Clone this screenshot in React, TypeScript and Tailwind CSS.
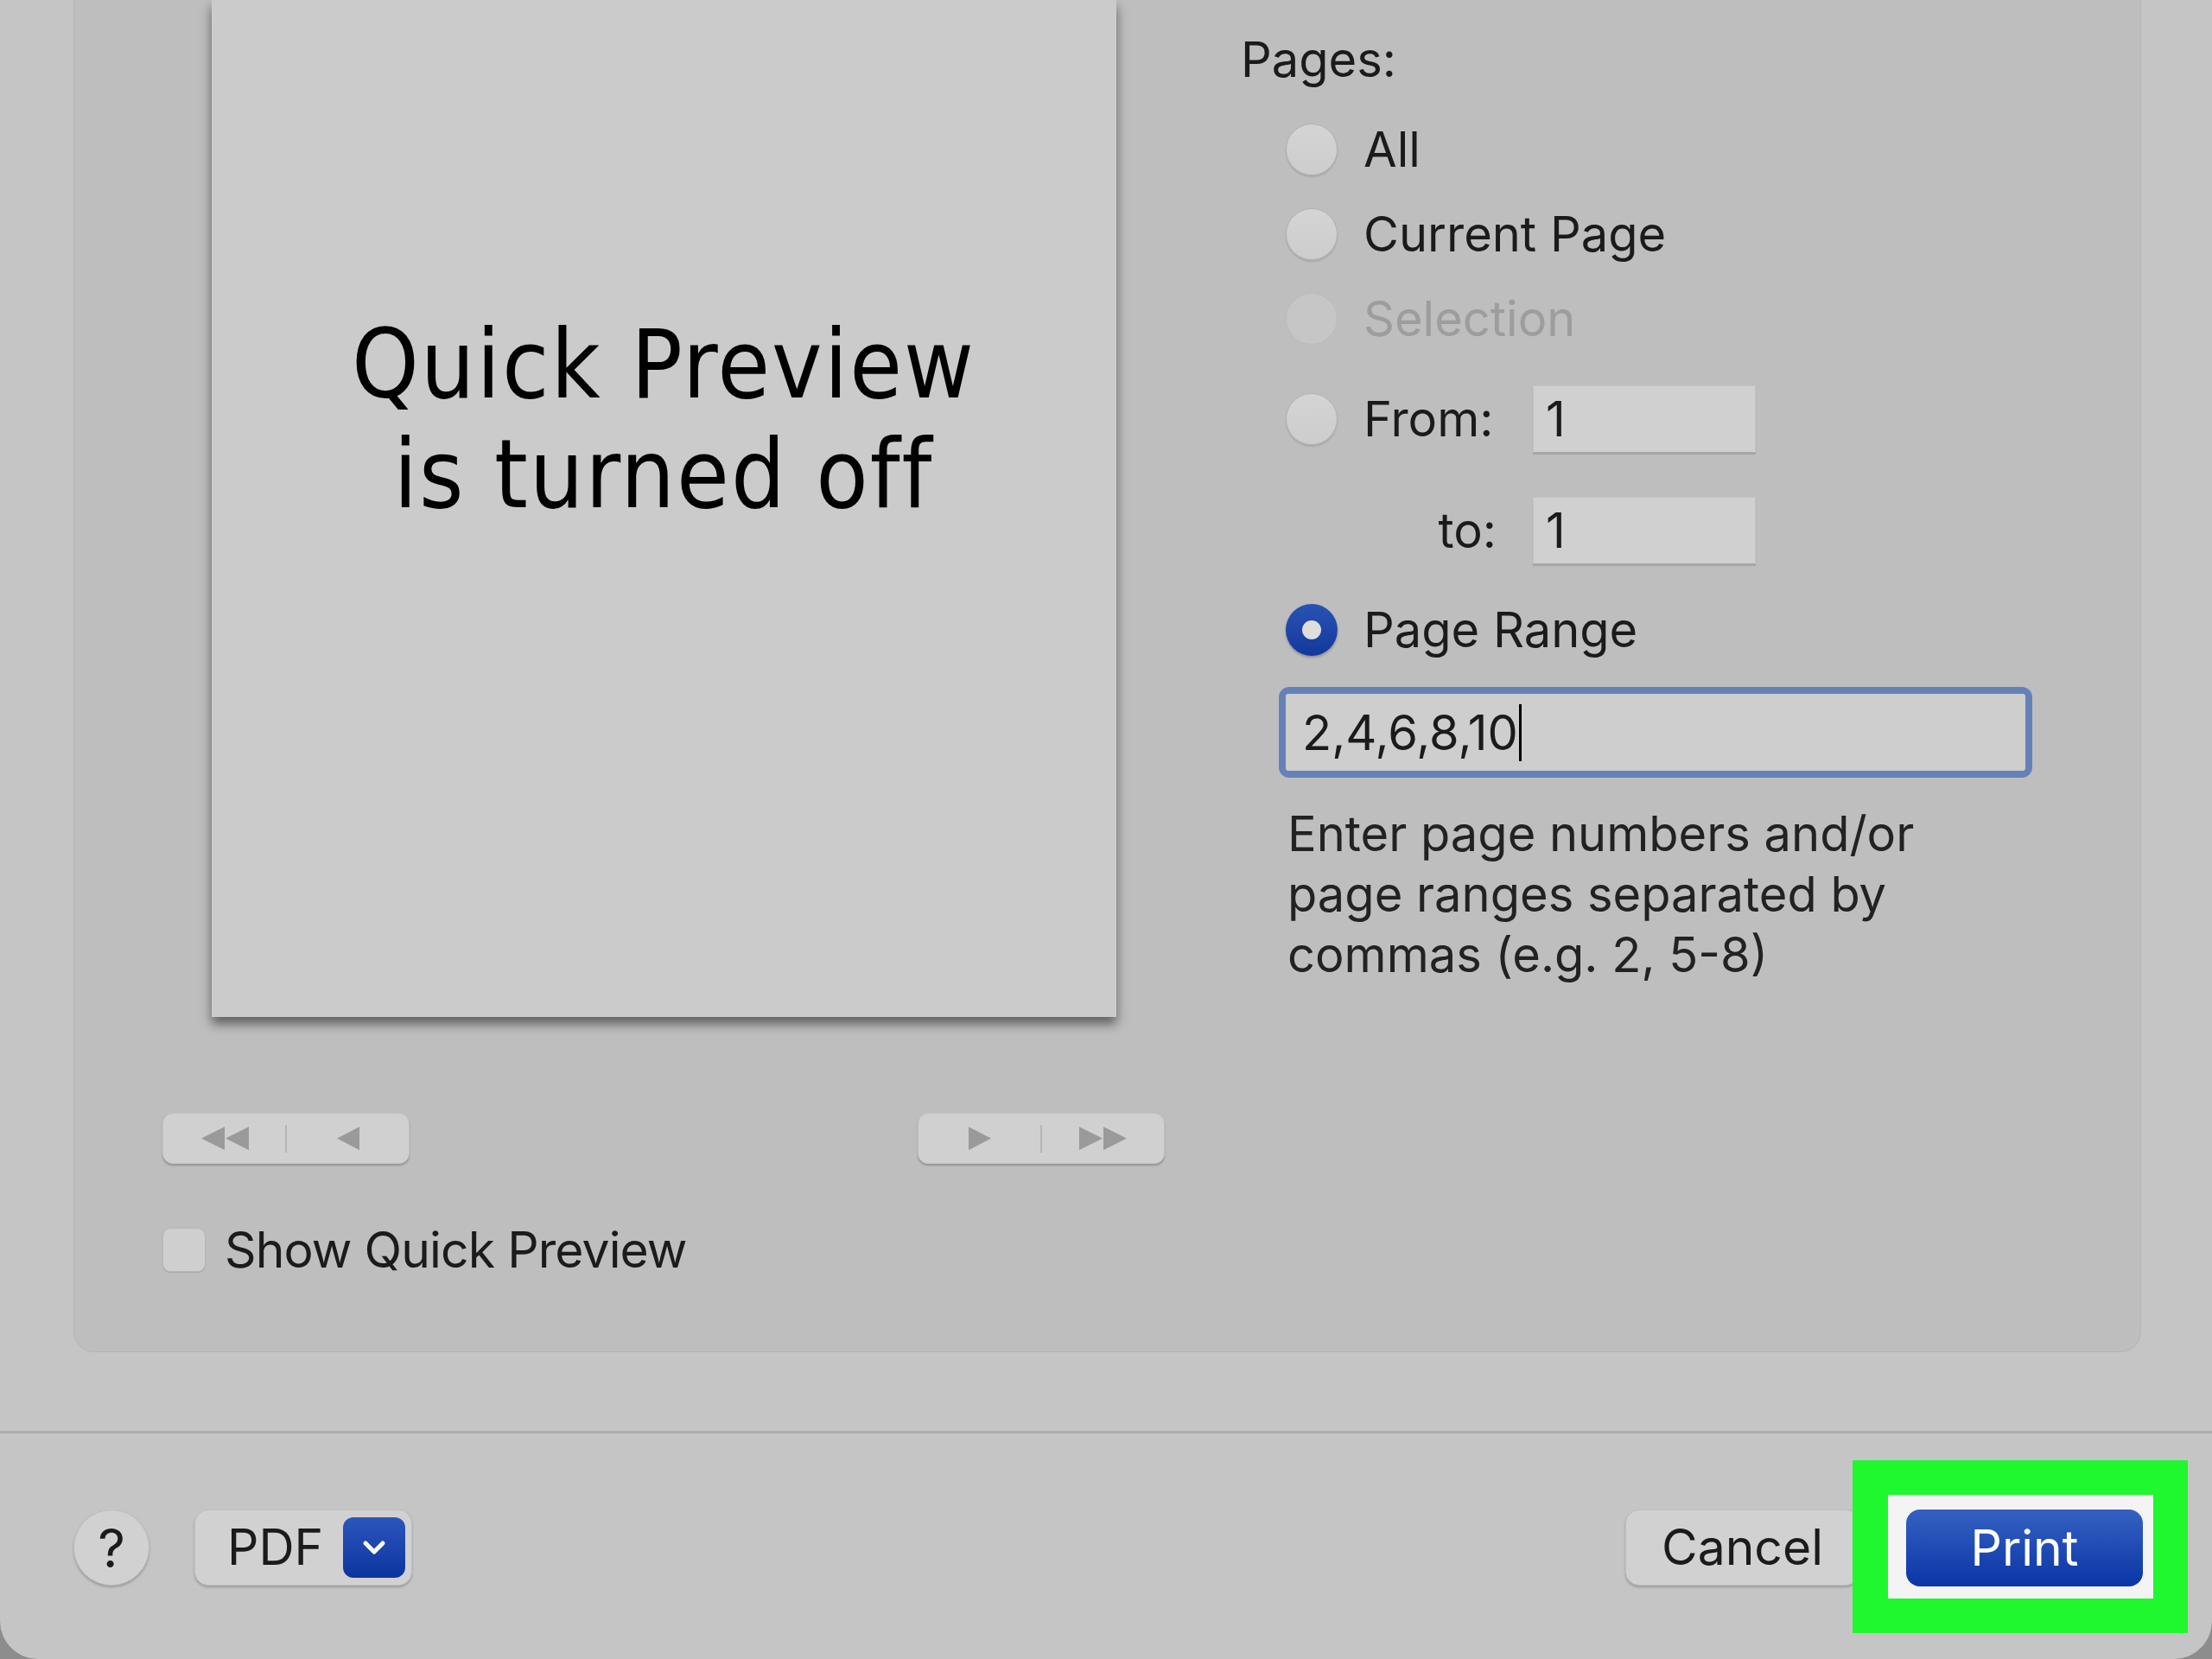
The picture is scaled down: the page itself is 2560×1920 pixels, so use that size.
import React from 'react';

const ui = "font-['Inter','Liberation_Sans',sans-serif]";

const Radio = ({ state }: { state: 'off' | 'on' | 'disabled' }) => {
    if (state === 'on') {
        return (
            <div className="w-[60px] h-[60px] rounded-full bg-gradient-to-b from-[#2a52b4] to-[#13389c] flex items-center justify-center shadow-[0_2px_3px_rgba(0,0,0,0.25)] shrink-0">
                <div className="w-[22px] h-[22px] rounded-full bg-[#dedede]" />
            </div>
        );
    }
    return (
        <div
            className={
                state === 'disabled'
                    ? 'w-[60px] h-[60px] rounded-full bg-[#c6c6c6] border border-[#bcbcbc] shrink-0'
                    : 'w-[60px] h-[60px] rounded-full bg-gradient-to-b from-[#d4d4d4] to-[#cdcdcd] border border-[#b2b2b2] shadow-[0_2px_2px_rgba(0,0,0,0.12)] shrink-0'
            }
        />
    );
};

const NavGroup = ({ side }: { side: 'left' | 'right' }) => (
    <div className="w-[286px] h-[59px] rounded-[12px] bg-[#d0d0d0] border border-[#c2c2c2] shadow-[0_2px_2px_rgba(0,0,0,0.22)] flex items-center">
        <div className="flex-1 flex justify-center">
            {side === 'left' ? (
                <svg width="60" height="27" viewBox="0 0 60 27" fill="#9a9a9a">
                    <polygon points="30,0 30,27 3,13.5" />
                    <polygon points="58,0 58,27 31,13.5" />
                </svg>
            ) : (
                <svg width="28" height="27" viewBox="0 0 28 27" fill="#9a9a9a">
                    <polygon points="1,0 1,27 27,13.5" />
                </svg>
            )}
        </div>
        <div className="w-[2px] h-[32px] bg-[#b4b4b4]" />
        <div className="flex-1 flex justify-center">
            {side === 'left' ? (
                <svg width="28" height="27" viewBox="0 0 28 27" fill="#9a9a9a">
                    <polygon points="27,0 27,27 1,13.5" />
                </svg>
            ) : (
                <svg width="60" height="27" viewBox="0 0 60 27" fill="#9a9a9a">
                    <polygon points="2,0 2,27 29,13.5" />
                    <polygon points="30,0 30,27 57,13.5" />
                </svg>
            )}
        </div>
    </div>
);

const SmallField = ({ value }: { value: string }) => (
    <div className="w-[258px] h-[78px] bg-[#d0d0d0] border border-[#c4c4c4] border-b-[#a9a9a9] shadow-[0_2px_1px_rgba(0,0,0,0.12)] flex items-center pl-[14px] text-[56px] text-[#1b1b1b]">
        {value}
    </div>
);

export default function App() {
    return (
        <div className={`w-[2560px] h-[1920px] bg-[#8d8d8d] ${ui}`}>
            <div className="relative w-[2560px] h-[1920px] bg-[#c5c5c5] rounded-b-[44px] overflow-hidden flex flex-col">
                {/* main panel */}
                <div className="h-[1656px] shrink-0">
                    <div className="ml-[85px] w-[2393px] h-[1565px] bg-[#bebebe] rounded-b-[24px] border border-t-0 border-[#b6b6b6] flex pl-[102px]">
                        {/* preview column */}
                        <div className="w-[1160px] flex flex-col">
                            <div className="self-center w-[1047px] h-[1177px] bg-[#cbcbcb] shadow-[0_8px_12px_rgba(0,0,0,0.5)] pt-[359px] text-center text-[110px] leading-[127px] tracking-[2px] text-black font-['DejaVu_Sans_Condensed','DejaVu_Sans',sans-serif] font-stretch-condensed">
                                Quick Preview
                                <br />
                                is turned off
                            </div>
                            <div className="mt-[111px] flex justify-between">
                                <NavGroup side="left" />
                                <NavGroup side="right" />
                            </div>
                            <div className="mt-[74px] flex items-center h-[51px]">
                                <div className="w-[50px] h-[51px] rounded-[9px] bg-[#cfcfcf] border border-[#b6b6b6] shadow-[0_1px_1px_rgba(0,0,0,0.12)]" />
                                <span className="ml-[22px] text-[57px] tracking-[-0.9px] text-[#1b1b1b]">Show Quick Preview</span>
                            </div>
                        </div>

                        {/* pages column */}
                        <div className="ml-[88px] pt-[35px] flex flex-col text-[56px] text-[#1b1b1b]">
                            <div className="h-[68px] flex items-center">Pages:</div>

                            <div className="mt-[21px] h-[98px] flex items-center pl-[52px]">
                                <Radio state="off" />
                                <span className="ml-[30px]">All</span>
                            </div>
                            <div className="h-[98px] flex items-center pl-[52px]">
                                <Radio state="off" />
                                <span className="ml-[30px]">Current Page</span>
                            </div>
                            <div className="h-[98px] flex items-center pl-[52px]">
                                <Radio state="disabled" />
                                <span className="ml-[30px] text-[#9d9d9d]">Selection</span>
                            </div>

                            <div className="mt-[28px] h-[78px] flex items-center pl-[52px]">
                                <div className="w-[286px] flex items-center">
                                    <Radio state="off" />
                                    <span className="ml-[30px]">From:</span>
                                </div>
                                <SmallField value="1" />
                            </div>
                            <div className="mt-[51px] h-[78px] flex items-center pl-[52px]">
                                <div className="w-[286px] text-right pr-[42px]">to:</div>
                                <SmallField value="1" />
                            </div>

                            <div className="mt-[45px] h-[62px] flex items-center pl-[52px]">
                                <Radio state="on" />
                                <span className="ml-[30px]">Page Range</span>
                            </div>

                            <div className="mt-[35px] ml-[44px] w-[872px] h-[105px] rounded-[12px] bg-[#6582b6] p-[8px]">
                                <div className="h-full bg-[#cecece] rounded-[3px] flex items-center pl-[19px]">
                                    <span>2,4,6,8,10</span>
                                    <span className="w-[3px] h-[66px] bg-black ml-[1px]" />
                                </div>
                            </div>

                            <p className="mt-[30px] ml-[54px] leading-[70px] text-[#222222]">
                                Enter page numbers and/or
                                <br />
                                page ranges separated by
                                <br />
                                commas (e.g. 2, 5-8)
                            </p>
                        </div>
                    </div>
                </div>

                {/* separator */}
                <div className="h-[3px] bg-[#adadad] shrink-0" />

                {/* bottom bar */}
                <div className="flex-1 flex items-start pt-[88px] pl-[85px] pr-[80px] text-[57px] text-[#1b1b1b]">
                    <div className="w-[88px] h-[88px] rounded-full bg-[#d1d1d1] border border-[#c0c0c0] shadow-[0_2px_3px_rgba(0,0,0,0.22)] flex items-center justify-center text-[62px]">
                        ?
                    </div>
                    <div className="ml-[52px] w-[252px] h-[88px] rounded-[16px] bg-[#d1d1d1] border border-[#c0c0c0] shadow-[0_2px_3px_rgba(0,0,0,0.22)] flex items-center pl-[37px] pr-[7px]">
                        <span>PDF</span>
                        <div className="ml-auto w-[72px] h-[70px] rounded-[12px] bg-gradient-to-b from-[#2c56bd] to-[#0b349f] flex items-center justify-center">
                            <svg width="28" height="18" viewBox="0 0 28 18" fill="none" stroke="#ffffff" strokeWidth="5" strokeLinecap="round" strokeLinejoin="round">
                                <polyline points="4,4 14,14 24,4" />
                            </svg>
                        </div>
                    </div>
                    <div className="ml-auto w-[271px] h-[88px] rounded-[16px] bg-[#d1d1d1] border border-[#c0c0c0] shadow-[0_2px_3px_rgba(0,0,0,0.22)] flex items-center justify-center">
                        Cancel
                    </div>
                    <div className="relative z-10 ml-[54px] w-[274px] h-[89px] rounded-[16px] bg-gradient-to-b from-[#3560c2] to-[#0a35a6] flex items-center justify-center text-white">
                        Print
                    </div>
                </div>

                {/* highlight annotation */}
                <div className="absolute left-[2144px] top-[1690px] w-[388px] h-[200px] bg-[#1ff72f] p-[40px] pl-[41px]">
                    <div className="w-full h-full bg-[#f4f4f4]" />
                </div>
            </div>
        </div>
    );
}
